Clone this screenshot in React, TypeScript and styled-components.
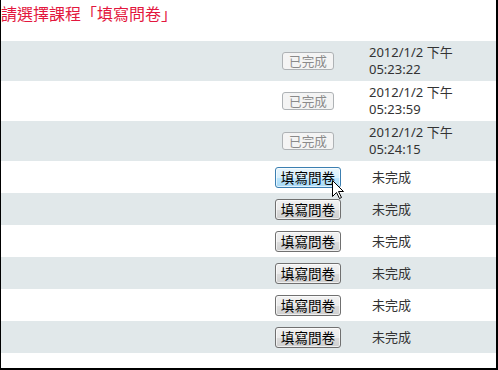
import React from "react";
import styled, { createGlobalStyle, css } from "styled-components";

const Global = createGlobalStyle`
  html, body { margin: 0; padding: 0; background: #fff; }
  body { font-family: "Noto Sans", "Noto Sans CJK TC", sans-serif; }
`;

const Frame = styled.div`
  position: relative;
  width: 498px;
  height: 370px;
  box-sizing: border-box;
  border-left: 1px solid #000;
  border-right: 2px solid #000;
  border-bottom: 2px solid #000;
  background: #fff;
  overflow: hidden;
`;

const Title = styled.div`
  height: 41px;
  box-sizing: border-box;
  padding: 2px 0 0 0;
  color: #e3173e;
  font-family: "Noto Sans CJK TC", sans-serif;
  font-size: 16px;
  line-height: 22px;
`;

const Row = styled.div<{ $alt: boolean; $tall: boolean }>`
  display: grid;
  grid-template-columns: 1fr 90px 143px;
  align-items: center;
  height: ${(p) => (p.$tall ? 40 : 32)}px;
  background: ${(p) => (p.$alt ? "#e1e8ea" : "#fff")};
`;

const Cell = styled.div`
  display: flex;
  justify-content: center;
  align-items: center;
`;

const StatusCell = styled.div<{ $indent: number }>`
  padding-left: ${(p) => p.$indent}px;
  color: #333;
  font-family: "Noto Sans", "Noto Sans CJK TC", sans-serif;
  font-size: 13px;
  line-height: 17px;
`;

const Btn = styled.button<{ $state: "done" | "normal" | "hover" }>`
  font-family: "Noto Sans CJK TC", sans-serif;
  margin: 0;
  box-sizing: border-box;
  border-radius: 3px;
  cursor: default;
  ${(p) =>
    p.$state === "done"
      ? css`
          height: 18px;
          padding: 0 6px;
          font-size: 12.6px;
          line-height: 16px;
          color: #8a8a8a;
          background: #f4f4f4;
          border: 1px solid #aeb2b5;
        `
      : css`
          height: 21px;
          padding: 0 5px;
          font-size: 13.6px;
          line-height: 19px;
          color: #000;
          border: 1px solid ${p.$state === "hover" ? "#3c7fb1" : "#707070"};
          background: ${p.$state === "hover"
            ? "linear-gradient(#eaf6fd 0%, #d9f0fc 50%, #bee6fd 51%, #a7d9f5 100%)"
            : "linear-gradient(#f2f2f2 0%, #ebebeb 50%, #dddddd 51%, #cfcfcf 100%)"};
          box-shadow: inset 0 0 0 1px rgba(255, 255, 255, 0.65);
        `}
`;

const Cursor = styled.svg`
  position: absolute;
  left: 331px;
  top: 180px;
`;

type Item =
  | { kind: "done"; date: string; time: string }
  | { kind: "todo"; hover?: boolean };

const items: Item[] = [
  { kind: "done", date: "2012/1/2 下午", time: "05:23:22" },
  { kind: "done", date: "2012/1/2 下午", time: "05:23:59" },
  { kind: "done", date: "2012/1/2 下午", time: "05:24:15" },
  { kind: "todo", hover: true },
  { kind: "todo" },
  { kind: "todo" },
  { kind: "todo" },
  { kind: "todo" },
  { kind: "todo" },
];

export default function App() {
  return (
    <>
      <Global />
      <Frame>
        <Title>請選擇課程「填寫問卷」</Title>
        {items.map((it, i) => (
          <Row key={i} $alt={i % 2 === 0} $tall={it.kind === "done"}>
            <div />
            <Cell>
              {it.kind === "done" ? (
                <Btn $state="done" disabled>
                  已完成
                </Btn>
              ) : (
                <Btn $state={it.hover ? "hover" : "normal"}>填寫問卷</Btn>
              )}
            </Cell>
            {it.kind === "done" ? (
              <StatusCell $indent={16}>
                {it.date}
                <br />
                {it.time}
              </StatusCell>
            ) : (
              <StatusCell $indent={19}>未完成</StatusCell>
            )}
          </Row>
        ))}
        <Cursor width="13" height="20" viewBox="0 0 13 20">
          <path
            d="M0.5 0.5 L0.5 16.5 L4.5 12.5 L7.5 18.5 L9.5 17.5 L6.5 11.5 L11.5 11.5 Z"
            fill="#fff"
            stroke="#000"
            strokeWidth="1"
            strokeLinejoin="miter"
          />
        </Cursor>
      </Frame>
    </>
  );
}
